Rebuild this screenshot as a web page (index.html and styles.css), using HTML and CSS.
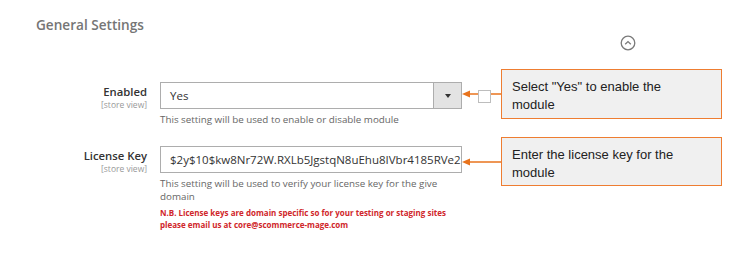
FILE: index.html
```html
<!DOCTYPE html>
<html lang="en">
<head>
    <meta charset="UTF-8">
    <title>General Settings</title>
    <link rel="stylesheet" href="styles.css">
</head>
<body>
    <div class="page">
        <h2 class="title">General Settings</h2>
        <div class="toolbar">
            <svg class="collapse" width="16" height="16" viewBox="0 0 16 16">
                <circle cx="8" cy="8" r="6.8" fill="none" stroke="#7a7a7a" stroke-width="1.3"/>
                <path d="M5.2 9.3 L8 6.6 L10.8 9.3" fill="none" stroke="#7a7a7a" stroke-width="1.3"/>
            </svg>
        </div>

        <div class="field field-enabled">
            <div class="field-label">
                <span class="label">Enabled</span>
                <span class="scope">[store view]</span>
            </div>
            <div class="control">
                <div class="select">
                    <span class="select-value">Yes</span>
                    <span class="select-btn"><span class="caret"></span></span>
                </div>
                <p class="note">This setting will be used to enable or disable module</p>
            </div>
            <span class="checkbox"></span>
            <svg class="pointer pointer-1" width="42" height="10" viewBox="0 0 42 10">
                <line x1="6" y1="5" x2="42" y2="5" stroke="#e8731d" stroke-width="1.3"/>
                <path d="M0 5 L8 1.5 L8 8.5 Z" fill="#e8731d"/>
            </svg>
            <div class="callout callout-1">Select "Yes" to enable the module</div>
        </div>

        <div class="field field-key">
            <div class="field-label">
                <span class="label">License Key</span>
                <span class="scope">[store view]</span>
            </div>
            <div class="control">
                <input class="input" type="text" value="$2y$10$kw8Nr72W.RXLb5JgstqN8uEhu8IVbr4185RVe2">
                <p class="note">This setting will be used to verify your license key for the give domain</p>
                <p class="warning">N.B. License keys are domain specific so for your testing or staging sites please email us at core@scommerce-mage.com</p>
            </div>
            <svg class="pointer pointer-2" width="42" height="10" viewBox="0 0 42 10">
                <line x1="6" y1="5" x2="42" y2="5" stroke="#e8731d" stroke-width="1.3"/>
                <path d="M0 5 L8 1.5 L8 8.5 Z" fill="#e8731d"/>
            </svg>
            <div class="callout callout-2">Enter the license key for the module</div>
        </div>
    </div>
</body>
</html>
```

FILE: styles.css
```css
body {
    margin: 0;
    background: #fff;
    font-family: 'Open Sans', Arial, sans-serif;
}
.page {
    padding: 16px 0 0 36px;
}
.title {
    margin: 0;
    font-size: 13.6px;
    font-weight: 600;
    line-height: 18px;
    color: #757575;
}
.toolbar {
    width: 600px;
    display: flex;
    justify-content: flex-end;
    margin-top: 1px;
    height: 16px;
}
.field {
    position: relative;
    display: flex;
    align-items: flex-start;
}
.field-enabled {
    margin-top: 31px;
}
.field-key {
    margin-top: 20px;
}
.field-label {
    width: 124px;
    padding-right: 13px;
    box-sizing: border-box;
    display: flex;
    flex-direction: column;
    align-items: flex-end;
    padding-top: 3px;
}
.label {
    font-size: 11.3px;
    font-weight: 600;
    color: #333;
    line-height: 14px;
}
.scope {
    font-size: 8.5px;
    color: #999;
    line-height: 11px;
}
.control {
    width: 302px;
}
.select, .input {
    display: block;
    width: 100%;
    height: 27px;
    margin: 0;
    box-sizing: border-box;
    border: 1px solid #adadad;
    border-radius: 0;
    font-family: 'Open Sans', Arial, sans-serif;
    font-size: 11.5px;
    color: #333;
}
.select {
    display: flex;
    align-items: stretch;
}
.select-value {
    flex: 1;
    padding-left: 9px;
    line-height: 25px;
}
.select-btn {
    width: 27px;
    background: #e3e3e3;
    border-left: 1px solid #adadad;
    display: flex;
    align-items: center;
    justify-content: center;
}
.caret {
    width: 0;
    height: 0;
    border-left: 3.5px solid transparent;
    border-right: 3.5px solid transparent;
    border-top: 4px solid #333;
}
.input {
    padding: 0 0 0 9px;
    outline: none;
}
.note {
    margin: 4px 0 0 0;
    font-size: 9.8px;
    line-height: 13px;
    color: #666;
}
.warning {
    margin: 4px 0 0 0;
    font-size: 8px;
    font-weight: 700;
    line-height: 12px;
    color: #d0262a;
}
.checkbox {
    position: relative;
    z-index: 1;
    width: 13px;
    height: 13px;
    box-sizing: border-box;
    margin: 8px 0 0 16px;
    border: 1px solid #bdbdbd;
    background: #fff;
}
.pointer {
    position: absolute;
    left: 426px;
}
.pointer-1 { top: 7px; }
.pointer-2 { top: 11px; }
.callout {
    position: absolute;
    left: 465px;
    width: 221px;
    box-sizing: border-box;
    padding: 8px 40px 7px 10px;
    background: #f0f0f0;
    border: 1px solid #ee7d31;
    font-family: 'Liberation Sans', Arial, sans-serif;
    font-size: 13px;
    line-height: 18px;
    color: #222;
}
.callout-1 { top: -13px; height: 50px; }
.callout-2 { top: -9px; height: 49px; }
```
